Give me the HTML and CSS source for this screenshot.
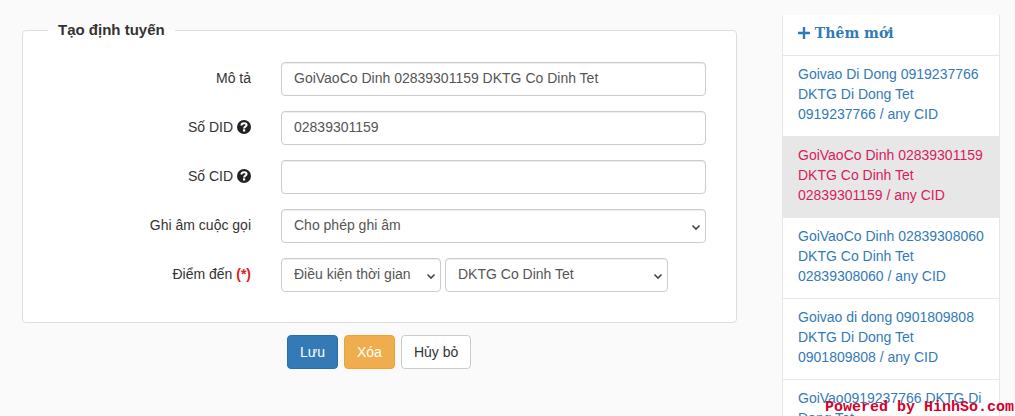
FILE: index.html
```html
<!DOCTYPE html>
<html lang="vi">
<head>
    <meta charset="UTF-8">
    <meta name="viewport" content="width=device-width, initial-scale=1.0">
    <title>Tạo định tuyến</title>
    <link rel="stylesheet" href="styles.css">
</head>
<body>
    <div class="page">
        <form class="route-form">
            <fieldset>
                <legend>Tạo định tuyến</legend>
                <div class="form-row">
                    <label for="description">Mô tả</label>
                    <input type="text" class="form-control" id="description" name="description" value="GoiVaoCo Dinh 02839301159 DKTG Co Dinh Tet">
                </div>
                <div class="form-row">
                    <label for="did">Số DID
                        <svg class="help-icon" viewBox="0 0 14 14" aria-hidden="true">
                            <circle cx="7" cy="7" r="7" fill="#222"/>
                            <path d="M4.4 5.5C4.5 3.9 5.5 3.2 7.1 3.2C8.6 3.2 9.6 4 9.6 5.1C9.6 6.7 7.1 6.6 7.1 8.4" fill="none" stroke="#fff" stroke-width="2"/>
                            <rect x="6" y="9.3" width="2.2" height="2.2" fill="#fff"/>
                        </svg>
                    </label>
                    <input type="text" class="form-control" id="did" name="did" value="02839301159">
                </div>
                <div class="form-row">
                    <label for="cid">Số CID
                        <svg class="help-icon" viewBox="0 0 14 14" aria-hidden="true">
                            <circle cx="7" cy="7" r="7" fill="#222"/>
                            <path d="M4.4 5.5C4.5 3.9 5.5 3.2 7.1 3.2C8.6 3.2 9.6 4 9.6 5.1C9.6 6.7 7.1 6.6 7.1 8.4" fill="none" stroke="#fff" stroke-width="2"/>
                            <rect x="6" y="9.3" width="2.2" height="2.2" fill="#fff"/>
                        </svg>
                    </label>
                    <input type="text" class="form-control" id="cid" name="cid">
                </div>
                <div class="form-row">
                    <label for="recording">Ghi âm cuộc gọi</label>
                    <select class="form-control" id="recording" name="recording">
                        <option>Cho phép ghi âm</option>
                    </select>
                </div>
                <div class="form-row">
                    <label for="destination_type">Điểm đến <span class="required">(*)</span></label>
                    <div class="destination">
                        <select class="form-control destination-type" id="destination_type" name="destination_type">
                            <option>Điều kiện thời gian</option>
                        </select>
                        <select class="form-control destination-value" name="destination" aria-label="Điểm đến">
                            <option>DKTG Co Dinh Tet</option>
                        </select>
                    </div>
                </div>
            </fieldset>
            <div class="buttons">
                <button type="submit" class="btn btn-primary">Lưu</button>
                <button type="button" class="btn btn-warning">Xóa</button>
                <button type="reset" class="btn btn-default">Hủy bỏ</button>
            </div>
        </form>

        <nav class="route-list">
            <a href="#" class="add-new">
                <svg class="plus-icon" viewBox="0 0 12 12" aria-hidden="true">
                    <path d="M6 0V12M0 6H12" stroke="#337ab7" stroke-width="2.4"/>
                </svg>
                Thêm mới
            </a>
            <a href="#">Goivao Di Dong 0919237766 DKTG Di Dong Tet<br>0919237766 / any CID</a>
            <a href="#" class="active">GoiVaoCo Dinh 02839301159 DKTG Co Dinh Tet<br>02839301159 / any CID</a>
            <a href="#">GoiVaoCo Dinh 02839308060 DKTG Co Dinh Tet<br>02839308060 / any CID</a>
            <a href="#">Goivao di dong 0901809808 DKTG Di Dong Tet<br>0901809808 / any CID</a>
            <a href="#">GoiVao0919237766 DKTG Di Dong Tet</a>
        </nav>
    </div>
    <div class="powered">Powered by HinhSo.com</div>
</body>
</html>
```
FILE: styles.css
```css
* {
    box-sizing: border-box;
}
body {
    position: relative;
    height: 100vh;
    margin: 0;
    overflow: hidden;
    background-color: #fafafa;
    color: #333;
    font-family: "Liberation Sans", Arial, sans-serif;
    font-size: 14px;
    line-height: 20px;
}
.page {
    display: grid;
    grid-template-columns: 1fr 218px;
    gap: 45px;
    align-items: start;
    padding: 15px 15px 0 22px;
}
fieldset {
    margin: 5px 0 0;
    padding: 22px 30px 15px 0;
    background-color: #fff;
    border: 1px solid #ddd;
    border-radius: 4px;
}
legend {
    margin-left: 25px;
    padding: 0 10px;
    font-size: 15px;
    font-weight: bold;
}
.form-row {
    display: grid;
    grid-template-columns: 228fr 425fr;
    gap: 30px;
    margin-bottom: 15px;
}
.form-row label {
    padding-top: 6px;
    text-align: right;
}
.help-icon {
    width: 14px;
    height: 14px;
    vertical-align: -2px;
}
.required {
    color: #e01b1b;
    font-weight: bold;
}
.form-control {
    width: 100%;
    height: 34px;
    padding: 5px 12px 7px;
    background-color: #fff;
    border: 1px solid #ccc;
    border-radius: 4px;
    box-shadow: inset 0 1px 1px rgba(0, 0, 0, 0.075);
    color: #555;
    font: inherit;
}
select.form-control {
    appearance: none;
    background-image: url("data:image/svg+xml,%3Csvg xmlns='http://www.w3.org/2000/svg' width='10' height='7' viewBox='0 0 10 7'%3E%3Cpath d='M1.5 1.5L5 5L8.5 1.5' fill='none' stroke='%23444' stroke-width='1.6'/%3E%3C/svg%3E");
    background-repeat: no-repeat;
    background-position: right 4px top 14px;
}
.destination {
    display: flex;
    gap: 4px;
}
.destination-type {
    width: 160px;
}
.destination-value {
    width: 223px;
}
.buttons {
    display: flex;
    gap: 6px;
    margin: 12px 0 0 265px;
}
.btn {
    padding: 6px 12px;
    border: 1px solid transparent;
    border-radius: 4px;
    font: inherit;
    cursor: pointer;
}
.btn-primary {
    background-color: #337ab7;
    border-color: #2e6da4;
    color: #fff;
}
.btn-warning {
    background-color: #f0ad4e;
    border-color: #eea236;
    color: #fff;
}
.btn-default {
    background-color: #fff;
    border-color: #ccc;
    color: #333;
}
.route-list {
    background-color: #fff;
    border: 1px solid #e7e7e7;
    border-top: none;
}
.route-list a {
    display: block;
    padding: 8px 14px 12px 15px;
    border-bottom: 1px solid #e7e7e7;
    color: #337ab7;
    text-decoration: none;
}
.route-list a.active {
    background-color: #e7e7e7;
    color: #d81b60;
}
.route-list a.add-new {
    font-family: "DejaVu Serif", serif;
    font-weight: bold;
}
.plus-icon {
    width: 12px;
    height: 12px;
    vertical-align: -1px;
}
.powered {
    position: absolute;
    right: 1px;
    bottom: 0;
    color: #d6002a;
    font-family: "Liberation Mono", monospace;
    font-size: 15px;
    font-weight: bold;
    line-height: 16px;
}
```
